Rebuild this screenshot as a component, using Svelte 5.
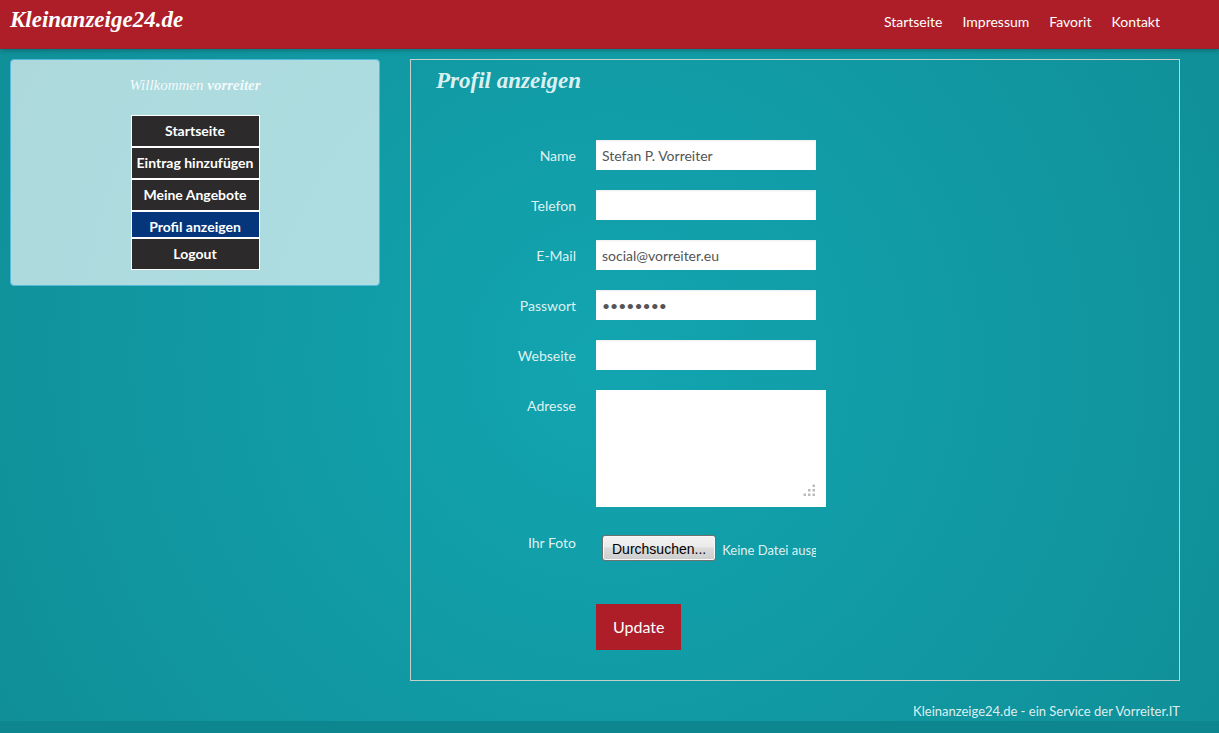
<script>
  let active = $state('Profil anzeigen');
  let fileName = $state('Keine Datei ausgewählt.');

  let profile = $state({
    name: 'Stefan P. Vorreiter',
    phone: '',
    email: 'social@vorreiter.eu',
    password: 'password',
    website: '',
    address: ''
  });

  const topLinks = ['Startseite', 'Impressum', 'Favorit', 'Kontakt'];
  const menu = ['Startseite', 'Eintrag hinzufügen', 'Meine Angebote', 'Profil anzeigen', 'Logout'];

  const fields = [
    { key: 'name', label: 'Name', type: 'text' },
    { key: 'phone', label: 'Telefon', type: 'tel' },
    { key: 'email', label: 'E-Mail', type: 'email' },
    { key: 'password', label: 'Passwort', type: 'password' },
    { key: 'website', label: 'Webseite', type: 'text' }
  ];

  function onFile(event) {
    const file = event.currentTarget.files[0];
    fileName = file ? file.name : 'Keine Datei ausgewählt.';
  }
</script>

<div class="page">
  <div class="backdrop">
    <header class="topbar">
      <a class="brand" href="#start">Kleinanzeige24.de</a>
      <nav class="topnav">
        {#each topLinks as link}
          <a href="#{link.toLowerCase()}">{link}</a>
        {/each}
      </nav>
    </header>

    <div class="container">
      <aside class="sidebar">
        <p class="welcome">Willkommen <strong>vorreiter</strong></p>
        <nav class="menu">
          {#each menu as item}
            <a href="#menu" class:active={item === active} onclick={() => (active = item)}>{item}</a>
          {/each}
        </nav>
      </aside>

      <main class="panel">
        <h1>Profil anzeigen</h1>
        <form onsubmit={(e) => e.preventDefault()}>
          {#each fields as field}
            <div class="row">
              <label for={field.key}>{field.label}</label>
              <input id={field.key} type={field.type} bind:value={profile[field.key]} autocomplete="off" />
            </div>
          {/each}

          <div class="row">
            <label for="address">Adresse</label>
            <div class="area">
              <textarea id="address" bind:value={profile.address}></textarea>
              <svg class="grip" viewBox="0 0 12 12" aria-hidden="true">
                <path d="M9.5 .5h2.5v2.5h-2.5zM9.5 5h2.5v2.5h-2.5zM5 5h2.5v2.5h-2.5zM9.5 9.5h2.5v2.5h-2.5zM5 9.5h2.5v2.5h-2.5zM.5 9.5h2.5v2.5h-2.5z" />
              </svg>
            </div>
          </div>

          <div class="row">
            <label for="photo">Ihr Foto</label>
            <div class="file">
              <span class="browse">Durchsuchen...</span>
              <span class="filename">{fileName}</span>
              <input id="photo" type="file" onchange={onFile} />
            </div>
          </div>

          <button class="update" type="submit">Update</button>
        </form>
      </main>
    </div>

    <footer>Kleinanzeige24.de - ein Service der Vorreiter.IT</footer>
  </div>
</div>

<style>
  :global(body) {
    margin: 0;
    background: #0e868f;
  }

  .page {
    min-height: 100vh;
    box-sizing: border-box;
    font-family: Lato, 'Liberation Sans', sans-serif;
    font-size: 14px;
    line-height: 20px;
    color: rgba(255, 255, 255, 0.87);
  }

  .backdrop {
    background: radial-gradient(circle at center, #12a5b0 0%, #108f98 100%);
  }

  a {
    color: #fff;
    text-decoration: none;
  }

  .topbar {
    display: flex;
    justify-content: space-between;
    align-items: flex-start;
    box-sizing: border-box;
    min-height: 49px;
    padding: 5px 59px 0 10px;
    background: #ad1e28;
    border-bottom: 1px solid #9c2029;
    box-shadow: 0 1px 5px rgba(0, 0, 0, 0.3);
  }

  .brand {
    font-family: 'Liberation Serif', serif;
    font-size: 23px;
    font-style: italic;
    font-weight: bold;
    line-height: 30px;
  }

  .topnav {
    display: flex;
    gap: 20px;
    padding-top: 7px;
  }

  .container {
    display: grid;
    grid-template-columns: 37fr 77fr;
    gap: 30px;
    align-items: start;
    max-width: 1170px;
    padding: 10px 10px 0;
  }

  .sidebar {
    display: flex;
    flex-direction: column;
    align-items: center;
    padding: 15px 0;
    background: rgba(255, 255, 255, 0.66);
    border: 1px solid #55b9d9;
    border-radius: 4px;
  }

  .welcome {
    margin: 0 0 20px;
    font-family: 'Liberation Serif', serif;
    font-size: 15px;
    font-style: italic;
  }

  .menu {
    display: flex;
    flex-direction: column;
    min-width: 129px;
  }

  .menu a {
    padding: 5px 4px;
    border: 1px solid #fff;
    background: #2c2a2b;
    font-weight: bold;
    text-align: center;
  }

  .menu a.active {
    padding-bottom: 0;
    background: #05357a;
  }

  .panel {
    padding: 6px 25px 30px;
    border: 1px solid rgba(226, 218, 212, 0.85);
  }

  h1 {
    margin: 0 0 44px;
    font-family: 'Liberation Serif', serif;
    font-size: 23px;
    font-style: italic;
    font-weight: bold;
    line-height: 30px;
  }

  .row {
    display: grid;
    grid-template-columns: 140px 1fr;
    gap: 20px;
    align-items: start;
    margin-bottom: 20px;
  }

  label {
    padding-top: 6px;
    text-align: right;
  }

  .row > input,
  textarea {
    box-sizing: border-box;
    border: 0;
    border-radius: 0;
    padding: 4px 6px;
    background: #fff;
    box-shadow: inset 0 1px 2px rgba(0, 0, 0, 0.08);
    color: #555;
    font: inherit;
  }

  .row > input {
    width: 220px;
    height: 30px;
  }

  .area {
    position: relative;
    width: 230px;
  }

  textarea {
    display: block;
    width: 100%;
    height: 117px;
    resize: none;
    box-shadow: none;
  }

  .grip {
    position: absolute;
    right: 11px;
    bottom: 11px;
    width: 12px;
    height: 12px;
    fill: #bbb;
    pointer-events: none;
  }

  .file {
    position: relative;
    display: flex;
    align-items: center;
    gap: 6px;
    box-sizing: border-box;
    width: 220px;
    height: 47px;
    padding: 0 0 5px 6px;
    overflow: hidden;
    white-space: nowrap;
  }

  /* transparent, lies over the drawn button and file name */
  .file input {
    position: absolute;
    inset: 0;
    width: 100%;
    opacity: 0;
    cursor: pointer;
  }

  .browse {
    padding: 3px 9px 1px;
    border: 1px solid #707070;
    border-radius: 3px;
    background: linear-gradient(#f3f3f3 0%, #ebebeb 45%, #dcdcdc 50%, #cdcdcd 100%);
    box-shadow: inset 0 0 0 1px #f8f8f8;
    color: #000;
    font-family: 'Liberation Sans', sans-serif;
  }

  .filename {
    padding-top: 4px;
    font-size: 13px;
  }

  .update {
    display: block;
    margin: 30px 0 0 160px;
    padding: 13px 17px;
    border: 0;
    background: #ad1e28;
    color: #fff;
    font-family: inherit;
    font-size: 16px;
    line-height: 20px;
    cursor: pointer;
  }

  footer {
    max-width: 1170px;
    padding: 21px 10px 0;
    font-size: 13px;
    line-height: 19px;
    text-align: right;
  }
</style>
